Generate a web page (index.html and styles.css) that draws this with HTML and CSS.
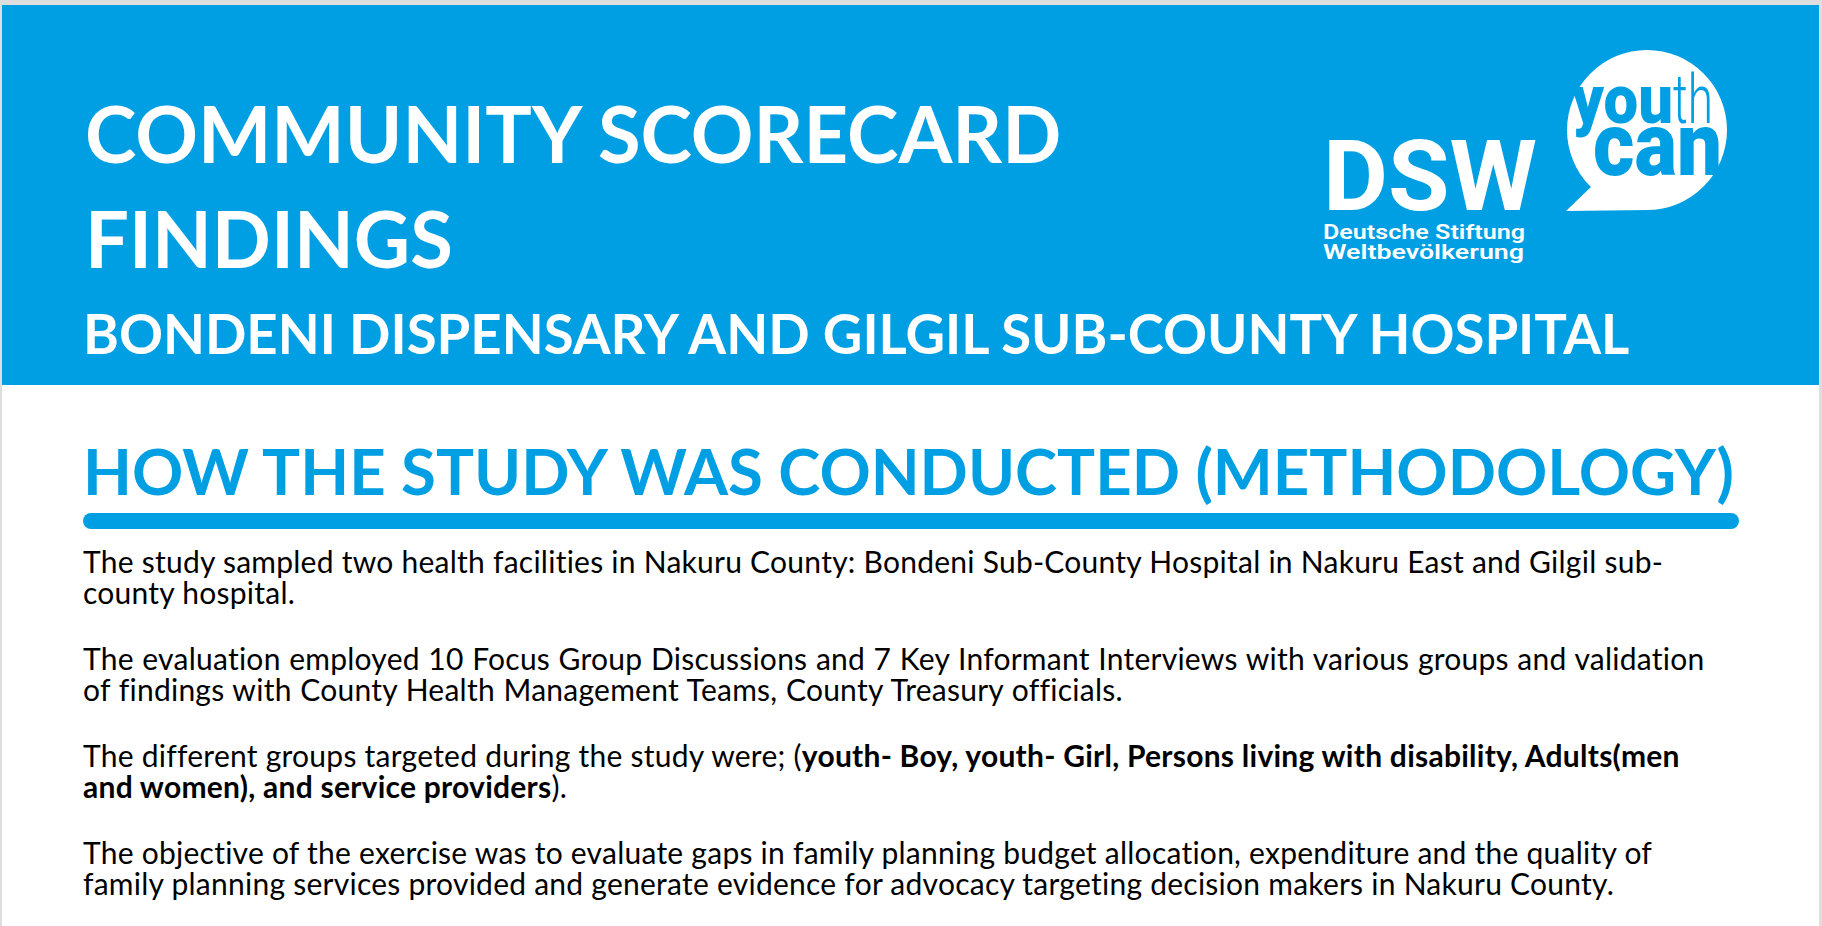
FILE: index.html
```html
<!DOCTYPE html>
<html lang="en">
<head>
<meta charset="utf-8">
<title>Community Scorecard Findings</title>
<link rel="stylesheet" href="styles.css">
</head>
<body>
<div class="page">
  <header class="hero">
    <div class="hero-top">
      <h1 class="title">COMMUNITY SCORECARD FINDINGS</h1>
      <svg class="logo" width="422" height="220" viewBox="0 0 422 220" aria-label="DSW Deutsche Stiftung Weltbevölkerung youth can">
        <text class="dsw" x="5" y="165" textLength="214" lengthAdjust="spacingAndGlyphs">DSW</text>
        <text class="dsw-sub" x="5" y="194" textLength="202" lengthAdjust="spacingAndGlyphs">Deutsche Stiftung</text>
        <text class="dsw-sub" x="5" y="214" textLength="201" lengthAdjust="spacingAndGlyphs">Weltbevölkerung</text>
        <circle cx="329" cy="85" r="80" fill="#fff"/>
        <path d="M248 166 L276 139 L330 165 Z" fill="#fff"/>
        <text class="yc-bold" x="254" y="78" textLength="101" lengthAdjust="spacingAndGlyphs">you</text>
        <text class="yc-light" x="355" y="78" textLength="40" lengthAdjust="spacingAndGlyphs">th</text>
        <text class="yc-can" x="275" y="130" textLength="129" lengthAdjust="spacingAndGlyphs">can</text>
      </svg>
    </div>
    <h2 class="subtitle">BONDENI DISPENSARY AND GILGIL SUB-COUNTY HOSPITAL</h2>
  </header>

  <section class="method">
    <h2 class="section-title">HOW THE STUDY WAS CONDUCTED (METHODOLOGY)</h2>
    <div class="rule"></div>
    <p>The study sampled two health facilities in Nakuru County: Bondeni Sub-County Hospital in Nakuru East and Gilgil sub-<br>county hospital.</p>
    <p class="wide">The evaluation employed 10 Focus Group Discussions and 7 Key Informant Interviews with various groups and validation<br>of findings with County Health Management Teams, County Treasury officials.</p>
    <p>The different groups targeted during the study were; (<strong>youth- Boy, youth- Girl, Persons living with disability, Adults(men<br>and women), and service providers</strong>).</p>
    <p>The objective of the exercise was to evaluate gaps in family planning budget allocation, expenditure and the quality of<br>family planning services provided and generate evidence for advocacy targeting decision makers in Nakuru County.</p>
  </section>
</div>
</body>
</html>
```

FILE: styles.css
```css
html, body {
  margin: 0;
  padding: 0;
}

body {
  background: #dedede;
  font-family: Lato, "Open Sans", "Liberation Sans", sans-serif;
  overflow: hidden;
  height: 926px;
}

.page {
  margin: 5px 3px 0 2px;
  background: #ffffff;
  height: 921px;
}

.hero {
  background: #009fe3;
  color: #ffffff;
  padding: 0 79px 22px 81px;
}

.hero-top {
  display: flex;
  justify-content: space-between;
  align-items: flex-start;
}

.title {
  margin: 76px 0 0 2px;
  max-width: 1100px;
  font-size: 77.7px;
  line-height: 105px;
  font-weight: 700;
  letter-spacing: 0;
}

.logo {
  display: block;
  margin-top: 40px;
  flex: none;
}

.logo .dsw {
  font-family: Roboto, "DejaVu Sans", sans-serif;
  font-weight: 700;
  font-size: 98px;
  fill: #ffffff;
}

.logo .dsw-sub {
  font-family: Roboto, "DejaVu Sans", sans-serif;
  font-weight: 600;
  font-size: 20px;
  fill: #ffffff;
}

.logo .yc-bold {
  font-family: Roboto, "Liberation Sans", sans-serif;
  font-weight: 900;
  font-size: 68px;
  fill: #009fe3;
}

.logo .yc-light {
  font-family: Roboto, "Liberation Sans", sans-serif;
  font-weight: 300;
  font-size: 68px;
  fill: #009fe3;
}

.logo .yc-can {
  font-family: Roboto, "Liberation Sans", sans-serif;
  font-weight: 900;
  font-size: 89px;
  fill: #009fe3;
}

.subtitle {
  margin: 12px 0 0 0;
  font-size: 54.5px;
  line-height: 60px;
  font-weight: 700;
  white-space: nowrap;
}

.method {
  padding: 0 79px 0 81px;
}

.section-title {
  margin: 47px 0 0 0;
  color: #009fe3;
  font-size: 63.5px;
  line-height: 77px;
  font-weight: 700;
  white-space: nowrap;
}

.rule {
  margin-top: 4px;
  width: 1656px;
  height: 16px;
  border-radius: 8px;
  background: #009fe3;
}

.method p {
  margin: 35px 0 0 0;
  width: 1700px;
  font-size: 30px;
  line-height: 31px;
  letter-spacing: 0.25px;
  color: #000000;
}

.method p.wide {
  word-spacing: 0.6px;
}

.method .rule + p {
  margin-top: 17px;
}

.method strong {
  font-weight: 700;
}
```
